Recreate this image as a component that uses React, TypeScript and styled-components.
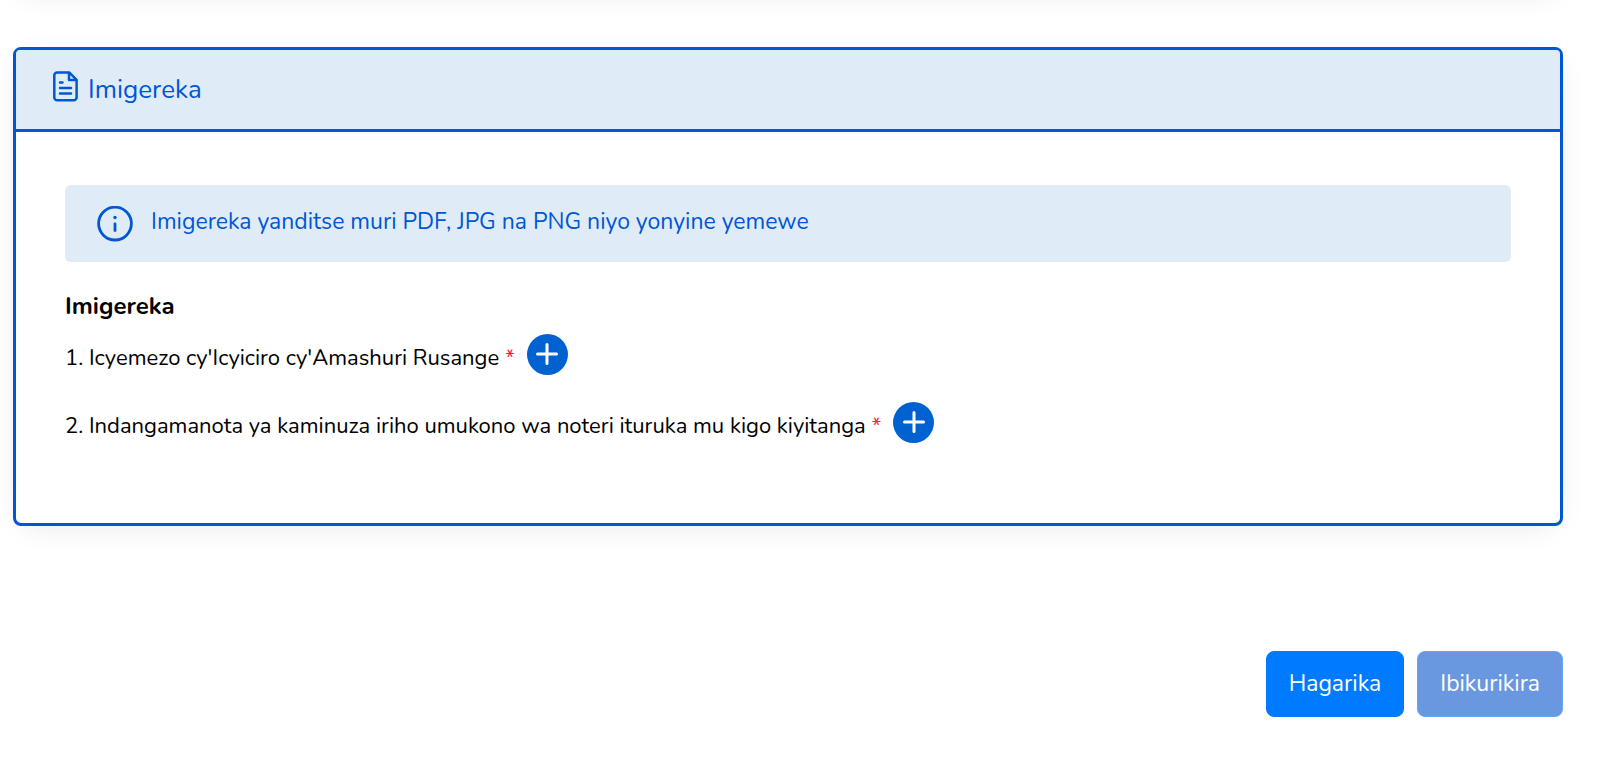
import React from "react";
import styled, { createGlobalStyle } from "styled-components";

const blue = "#0057d4";
const pale = "#dfecf7";
const cardShadow = "0 6px 32px -12px rgba(0, 0, 0, 0.14)";

const Global = createGlobalStyle`
  *, *::before, *::after { box-sizing: border-box; }
  body {
    margin: 0;
    background: #fff;
    color: #000;
    font-family: Nunito, Lato, "Noto Sans", sans-serif;
    font-size: 23px;
    line-height: 36px;
  }
`;

const Page = styled.main`
  padding: 0 37px 60px 13px;
`;

const PreviousCard = styled.div`
  height: 60px;
  margin-top: -66px;
  border-radius: 8px;
  box-shadow: ${cardShadow};
`;

const Card = styled.section`
  margin-top: 53px;
  border: 3px solid ${blue};
  border-radius: 8px;
  background: #fff;
  box-shadow: ${cardShadow};
`;

const CardHeader = styled.header`
  display: flex;
  align-items: center;
  gap: 10px;
  height: 82px;
  padding: 0 37px 6px;
  border-bottom: 3px solid ${blue};
  border-radius: 4px 4px 0 0;
  background: ${pale};
  color: ${blue};
`;

const CardTitle = styled.h2`
  margin: 0;
  padding-top: 6px;
  font-size: 26px;
  font-weight: 400;
`;

const CardBody = styled.div`
  padding: 53px 49px 80px;
`;

const Notice = styled.div`
  display: flex;
  align-items: center;
  gap: 18px;
  min-height: 77px;
  padding: 0 32px;
  border-radius: 6px;
  background: ${pale};
  color: ${blue};
`;

const NoticeText = styled.p`
  margin: 0;
  padding-bottom: 4px;
`;

const ListTitle = styled.h3`
  margin: 26px 0 9px;
  font-size: 24px;
  font-weight: 700;
`;

const List = styled.ol`
  display: flex;
  flex-direction: column;
  gap: 26px;
  margin: 0;
  padding: 0;
  list-style: none;
`;

const Item = styled.li`
  display: flex;
  align-items: center;
  gap: 12px;
  height: 42px;
  font-size: 22px;
`;

const ItemText = styled.span`
  padding-top: 8px;
`;

const Required = styled.span`
  color: #ff1744;
`;

const AddButton = styled.button`
  display: grid;
  place-items: center;
  width: 41px;
  height: 41px;
  padding: 0;
  border: 0;
  border-radius: 50%;
  background: #0062d1;
  color: #fff;
`;

const Actions = styled.div`
  display: flex;
  justify-content: flex-end;
  gap: 13px;
  margin-top: 125px;
`;

const ActionButton = styled.button<{ $muted?: boolean }>`
  height: 66px;
  padding: 0 22px;
  border: 1px solid ${(p) => (p.$muted ? "#66a5f8" : "#007bff")};
  border-radius: 8px;
  background: ${(p) => (p.$muted ? "#6998e1" : "#007bff")};
  color: #fff;
  font: inherit;
`;

const FileIcon = () => (
  <svg width="25" height="31" viewBox="0 0 25 31" fill="none" stroke="currentColor" strokeWidth="2.5" strokeLinecap="round" strokeLinejoin="round" aria-hidden="true">
    <path d="M4.200 1.400h12l7.400 7.500v17.500a2.900 2.900 0 0 1-2.900 2.900H4.200a2.900 2.900 0 0 1-2.900-2.900v-22a2.900 2.900 0 0 1 2.900-3z" />
    <path d="M16 2v7h7" />
    <path d="M7 11.500h2.500M7 17h11M7 22.500h11" />
  </svg>
);

const InfoIcon = () => (
  <svg width="36" height="36" viewBox="0 0 36 36" fill="none" stroke="currentColor" strokeWidth="2.8" strokeLinecap="round" aria-hidden="true">
    <circle cx="18" cy="17.600" r="16.400" />
    <path d="M18 18v6.500" />
    <circle cx="18" cy="11.500" r="1.700" fill="currentColor" stroke="none" />
  </svg>
);

const PlusIcon = () => (
  <svg width="22" height="22" viewBox="0 0 22 22" fill="none" stroke="currentColor" strokeWidth="3" strokeLinecap="round" aria-hidden="true">
    <path d="M11 1.500v19M1.500 11h19" />
  </svg>
);

const attachments = [
  "Icyemezo cy'Icyiciro cy'Amashuri Rusange",
  "Indangamanota ya kaminuza iriho umukono wa noteri ituruka mu kigo kiyitanga",
];

export default function App() {
  return (
    <>
      <Global />
      <Page>
        <PreviousCard />
        <Card>
          <CardHeader>
            <FileIcon />
            <CardTitle>Imigereka</CardTitle>
          </CardHeader>
          <CardBody>
            <Notice>
              <InfoIcon />
              <NoticeText>Imigereka yanditse muri PDF, JPG na PNG niyo yonyine yemewe</NoticeText>
            </Notice>
            <ListTitle>Imigereka</ListTitle>
            <List>
              {attachments.map((name, i) => (
                <Item key={name}>
                  <ItemText>
                    {i + 1}. {name} <Required>*</Required>
                  </ItemText>
                  <AddButton type="button" aria-label={name}>
                    <PlusIcon />
                  </AddButton>
                </Item>
              ))}
            </List>
          </CardBody>
        </Card>
        <Actions>
          <ActionButton type="button">Hagarika</ActionButton>
          <ActionButton type="button" $muted>Ibikurikira</ActionButton>
        </Actions>
      </Page>
    </>
  );
}
